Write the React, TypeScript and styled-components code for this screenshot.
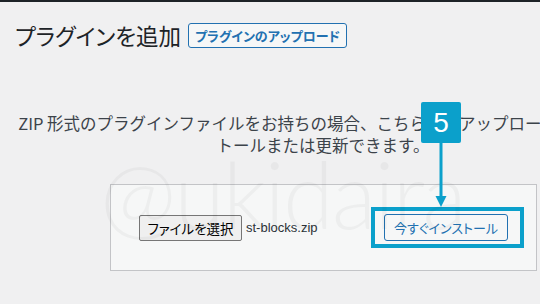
import styled, { createGlobalStyle } from "styled-components";

const GlobalStyle = createGlobalStyle`
  html, body {
    margin: 0;
    padding: 0;
    background: #f0f0f1;
    overflow: hidden;
  }
  body {
    font-family: "Noto Sans CJK JP", "Noto Sans", sans-serif;
    font-feature-settings: "palt";
  }
`;

const Page = styled.div`
  position: relative;
  width: 540px;
  height: 304px;
  overflow: hidden;
  color: #3c434a;
`;

const AdminBar = styled.div`
  height: 2px;
  background: #1d2327;
`;

const Header = styled.div`
  display: flex;
  align-items: center;
  gap: 7px;
  padding: 21px 0 0 15px;
`;

const Title = styled.h1`
  margin: 0;
  font-size: 22.5px;
  font-weight: 400;
  line-height: 25px;
  color: #1d2327;
`;

const OutlineButton = styled.button<{ $bold?: boolean }>`
  display: inline-flex;
  align-items: center;
  justify-content: center;
  box-sizing: border-box;
  height: ${(p) => (p.$bold ? "25px" : "27px")};
  padding: 0 ${(p) => (p.$bold ? "6px" : "9px")};
  border: 1px solid #2271b1;
  border-radius: 3px;
  background: #f6f7f7;
  color: #2271b1;
  font-family: inherit;
  font-feature-settings: "palt";
  font-size: 13px;
  font-weight: ${(p) => (p.$bold ? 600 : 400)};
  cursor: pointer;
`;

const UploadSection = styled.div`
  width: 646px;
`;

const Help = styled.p`
  margin: 64px 0 0;
  text-align: center;
  font-size: 16.5px;
  font-feature-settings: normal;
  line-height: 22px;
  color: #3c434a;

  span {
    display: inline-block;
    margin-left: 12px;
    white-space: nowrap;
  }
`;

const UploadForm = styled.form`
  box-sizing: border-box;
  display: flex;
  align-items: center;
  justify-content: space-between;
  width: 427px;
  height: 87px;
  margin: 28px 0 0 110px;
  padding: 0 28px;
  background: #f6f7f7;
  border: 1px solid #c3c4c7;
`;

const FilePicker = styled.div`
  display: flex;
  align-items: center;
  gap: 4px;
`;

const FileButton = styled.button`
  box-sizing: border-box;
  height: 26px;
  width: 103px;
  padding: 0;
  border: 1px solid #767676;
  border-radius: 2px;
  background: #efefef;
  color: #000;
  font-family: inherit;
  font-feature-settings: "palt";
  font-size: 13.5px;
`;

const FileName = styled.span`
  font-family: "Liberation Sans", Arial, sans-serif;
  font-size: 13px;
  color: #2c3338;
`;

const InstallWrap = styled.div`
  position: relative;
  display: flex;
`;

const Highlight = styled.div`
  position: absolute;
  inset: -7px -16px -7px -13px;
  border: 4px solid #0ba0cb;
  pointer-events: none;
`;

const Annotation = styled.div`
  position: absolute;
  left: 421px;
  top: 102px;
  display: flex;
  flex-direction: column;
  align-items: center;
`;

const Badge = styled.div`
  width: 40px;
  height: 41px;
  border-radius: 2px;
  background: #0ba0cb;
  color: #fff;
  display: flex;
  align-items: center;
  justify-content: center;
  font-family: "Liberation Sans", Arial, sans-serif;
  font-size: 28px;
  line-height: 1;
`;

const Watermark = styled.div`
  position: absolute;
  left: 100px;
  top: 138px;
  font-family: Lato, "Noto Sans", sans-serif;
  font-weight: 300;
  font-size: 92px;
  letter-spacing: -2px;
  color: rgba(0, 0, 0, 0.035);
  pointer-events: none;
  white-space: nowrap;
`;

const App = () => {
  return (
    <>
      <GlobalStyle />
      <Page>
        <AdminBar />
        <Header>
          <Title>プラグインを追加</Title>
          <OutlineButton $bold>プラグインのアップロード</OutlineButton>
        </Header>

        <UploadSection>
          <Help>
            <span>ZIP 形式のプラグインファイルをお持ちの場合、こちらからアップロードしてインス</span>
            <br />
            トールまたは更新できます。
          </Help>

          <UploadForm onSubmit={(e) => e.preventDefault()}>
            <FilePicker>
              <FileButton type="button">ファイルを選択</FileButton>
              <FileName>st-blocks.zip</FileName>
            </FilePicker>
            <InstallWrap>
              <OutlineButton type="submit">今すぐインストール</OutlineButton>
              <Highlight />
            </InstallWrap>
          </UploadForm>
        </UploadSection>

        <Watermark>@ukidaira</Watermark>

        <Annotation>
          <Badge>5</Badge>
          <svg width="12" height="64" viewBox="0 0 12 64">
            <rect x="4.5" y="0" width="3" height="55" fill="#0ba0cb" />
            <polygon points="0.5,53 11.5,53 6,64" fill="#0ba0cb" />
          </svg>
        </Annotation>
      </Page>
    </>
  );
};

export default App;
